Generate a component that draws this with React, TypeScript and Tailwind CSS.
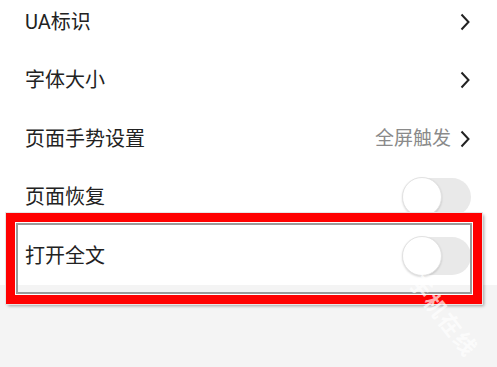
import { ReactNode } from "react"

const font = { fontFamily: 'Roboto, "Noto Sans CJK SC", sans-serif' }

function Chevron() {
  return (
    <svg width="12" height="18" viewBox="0 0 12 18" className="ml-2">
      <path d="M2.5 1.5 L9.5 9 L2.5 16.5" fill="none" stroke="#222" strokeWidth="2" />
    </svg>
  )
}

function Toggle() {
  return (
    <div className="relative w-[68px] h-[38px] rounded-full bg-[#e9e9e9]">
      <div className="absolute -left-[1px] -top-[1px] w-[40px] h-[40px] rounded-full bg-white border border-[#e2e2e2] shadow-[0_1px_2px_rgba(0,0,0,0.15)]" />
    </div>
  )
}

function Row({ label, right }: { label: string; right: ReactNode }) {
  return (
    <div className="h-[58.5px] flex items-center justify-between pl-[25px] pr-[26px]">
      <span className="text-[20px] text-[#222]">{label}</span>
      {right}
    </div>
  )
}

export default function App() {
  return (
    <div className="relative w-[497px] h-[367px] overflow-hidden bg-[#f4f4f4]" style={font}>
      <div className="bg-white -mt-[7.5px]">
        <Row label="UA标识" right={<Chevron />} />
        <Row label="字体大小" right={<Chevron />} />
        <Row
          label="页面手势设置"
          right={
            <div className="flex items-center">
              <span className="text-[19px] text-[#8a8a8a]">全屏触发</span>
              <Chevron />
            </div>
          }
        />
        <Row label="页面恢复" right={<Toggle />} />
        <Row label="打开全文" right={<Toggle />} />
      </div>

      {/* annotation box */}
      <div className="absolute left-[6px] top-[213px] w-[476px] h-[91px] border-[10px] border-[#ff0000] shadow-[2px_2px_3px_rgba(0,0,0,0.35)] outline outline-1 outline-[#e6e6e6]">
        <div className="w-full h-full border-2 border-[#9a9a9a] outline outline-1 outline-white" />
      </div>

      {/* watermark */}
      <div className="absolute left-[395px] top-[300px] rotate-[52deg] text-[22px] font-bold text-white/70 tracking-[2px]">
        手机在线
      </div>
    </div>
  )
}
